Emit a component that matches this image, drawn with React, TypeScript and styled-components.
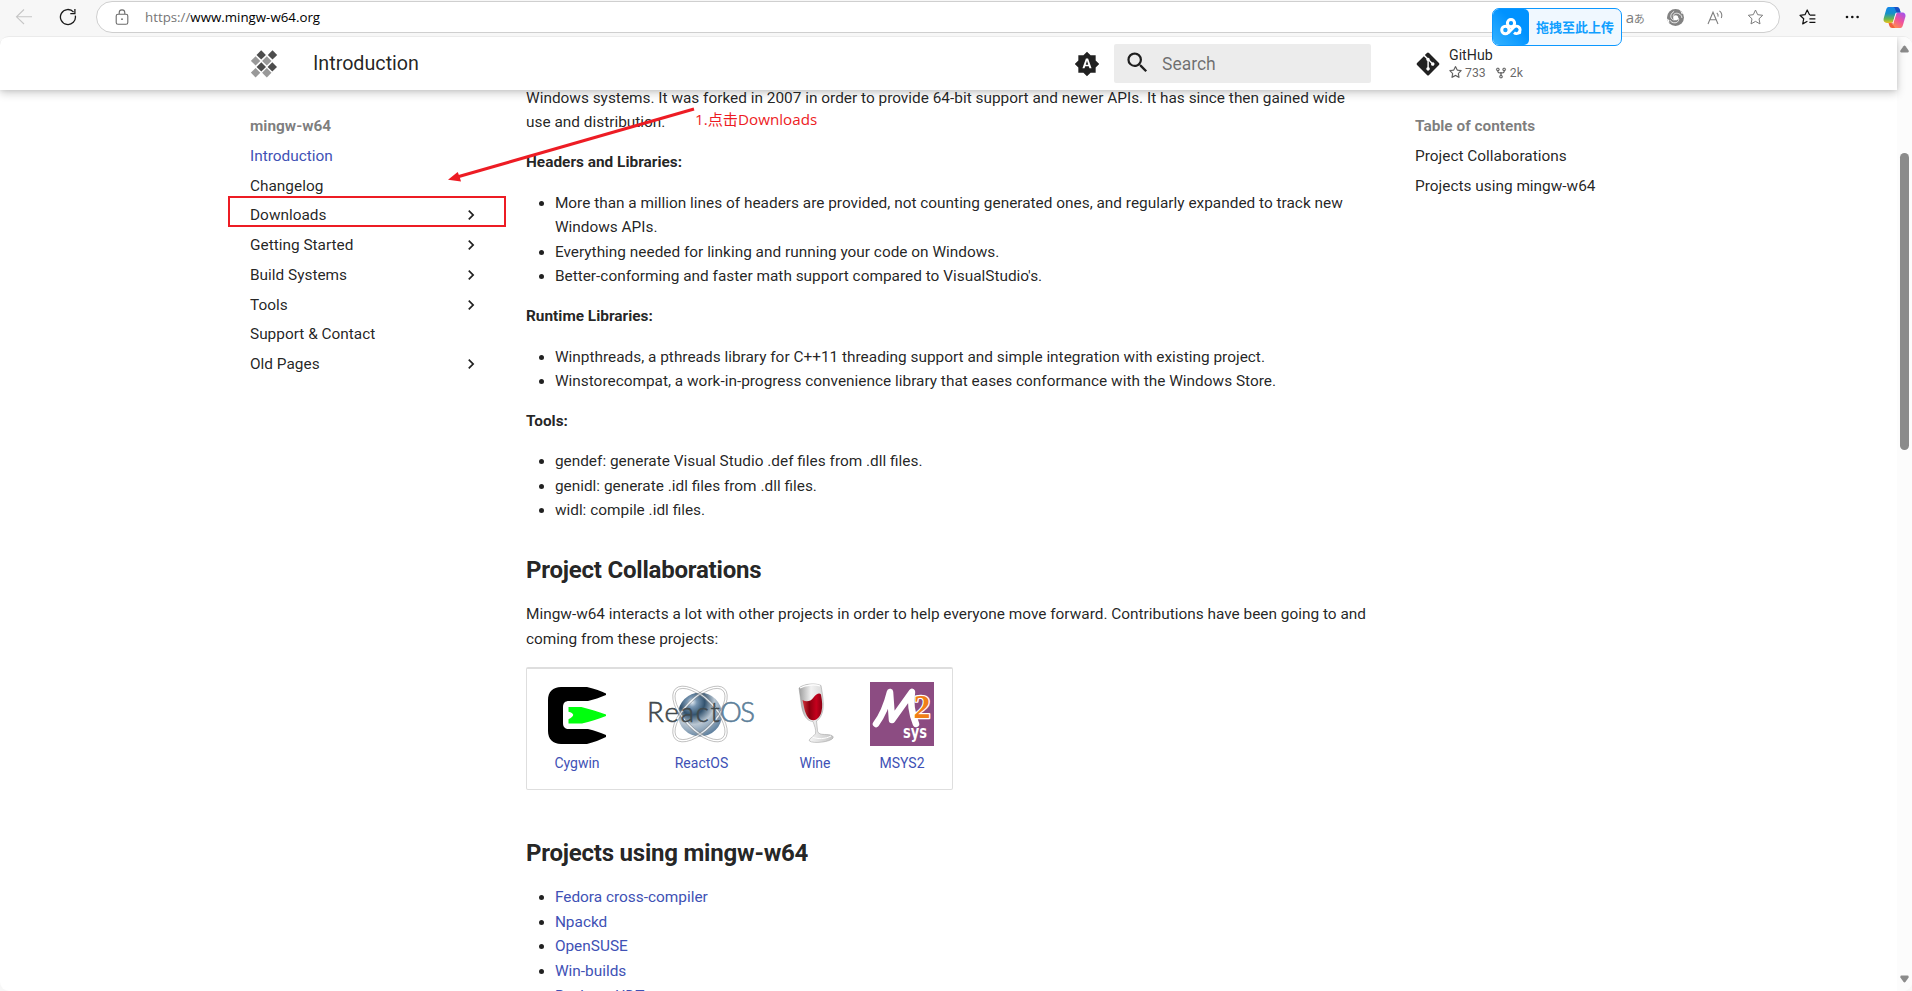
import React from 'react';
import styled, { createGlobalStyle } from 'styled-components';
import { MdBrightnessAuto, MdSearch } from 'react-icons/md';
import { FaGitAlt } from 'react-icons/fa';
import { GoRepoForked, GoStar } from 'react-icons/go';

const GlobalStyle = createGlobalStyle`
  * { box-sizing: border-box; }
  html, body { margin: 0; padding: 0; overflow: hidden; }
  a { color: inherit; text-decoration: none; }
`;

const Browser = styled.div`
  position: relative;
  display: flex;
  flex-direction: column;
  width: 1912px;
  height: 991px;
  overflow: hidden;
  background: #f7f7f7;
  color: #000000de;
  font-family: Roboto, 'Liberation Sans', sans-serif;
  font-size: 15.4px;
`;

/* ---------- Browser toolbar ---------- */

const Toolbar = styled.div`
  display: flex;
  align-items: flex-start;
  height: 36px;
  flex: none;
  padding: 1px 8px 0 7px;
`;

const ToolButton = styled.span<{ $width: number }>`
  display: flex;
  align-items: center;
  justify-content: center;
  flex: none;
  width: ${(p) => p.$width}px;
  height: 32px;
`;

const AddressBar = styled.div`
  display: flex;
  align-items: center;
  width: 1684px;
  height: 32px;
  flex: none;
  margin-left: 1px;
  padding: 0 4px 0 16px;
  border: 1px solid #cfcfcf;
  border-radius: 16px;
  background: #fff;
`;

const Url = styled.span`
  flex: 1;
  padding-left: 14px;
  font-family: 'Open Sans', 'Noto Sans', sans-serif;
  font-size: 13.3px;
  line-height: 20px;
  color: #000;
`;

const Scheme = styled.span`
  color: #767676;
`;

const Translate = styled.span`
  font-family: 'Open Sans', 'Noto Sans CJK JP', sans-serif;
  font-weight: 400;
  font-size: 15px;
  letter-spacing: -0.5px;
  color: #7d7d7d;
  small { font-size: 11px; font-weight: 400; }
`;

/* ---------- Page ---------- */

const Viewport = styled.div`
  display: flex;
  flex: 1;
  min-height: 0;
  overflow: hidden;
  border-top: 1px solid #ebebeb;
  border-radius: 9px;
  background: #fff;
`;

const Page = styled.div`
  display: flex;
  flex-direction: column;
  flex: 1;
  min-width: 0;
`;

const Header = styled.header`
  position: relative;
  z-index: 1;
  display: flex;
  align-items: center;
  height: 53px;
  flex: none;
  padding: 0 229px 0 251px;
  background: #fff;
  box-shadow: 0 0 4.4px #0000001a, 0 4.4px 8.8px #0003;
`;

const HeaderTitle = styled.span`
  flex: 1;
  padding-left: 35px;
  font-size: 19.7px;
  line-height: 53px;
`;

const SearchBox = styled.label`
  display: flex;
  align-items: center;
  width: 257px;
  height: 39px;
  margin-left: 14px;
  padding-left: 10px;
  border-radius: 2px;
  background: #ececec;
  font-size: 17.5px;
  color: #0000008a;
  gap: 11px;
  svg { color: #000000de; margin-top: -2px; }
`;

const Source = styled.a`
  display: flex;
  align-items: center;
  width: 253px;
  margin-left: 44px;
  gap: 8px;
  svg { flex: none; }
`;

const RepoName = styled.div`
  font-size: 14.2px;
  line-height: 18px;
`;

const Facts = styled.div`
  display: flex;
  gap: 9px;
  font-size: 12.3px;
  line-height: 18px;
  color: #0000009e;
`;

const Fact = styled.span`
  display: flex;
  align-items: center;
  gap: 3px;
`;

const Main = styled.div`
  display: flex;
  flex: 1;
  min-height: 0;
  overflow: hidden;
`;

const Sidebar = styled.nav<{ $primary?: boolean }>`
  flex: none;
  width: ${(p) => (p.$primary ? 234 : 266)}px;
  margin-left: ${(p) => (p.$primary ? 250 : 35)}px;
  padding-top: 26.4px;
  line-height: 20px;
`;

const NavTitle = styled.div`
  font-weight: 700;
  color: #00000085;
`;

const NavItem = styled.a<{ $active?: boolean }>`
  display: flex;
  align-items: center;
  justify-content: space-between;
  height: 20px;
  margin-top: 9.7px;
  padding-right: 3px;
  color: ${(p) => (p.$active ? '#4051b5' : 'inherit')};
`;

const Article = styled.article`
  flex: none;
  width: 854px;
  margin-left: 42px;
  margin-top: -4.2px;
  line-height: 24.64px;
`;

const Paragraph = styled.p`
  margin: 0 0 15.4px;
`;

const Bullets = styled.ul`
  margin: 0 0 15.4px;
  padding: 0 0 0 28.9px;
`;

const Heading = styled.h2`
  margin: 31px 0 14.4px;
  font-size: 24.06px;
  font-weight: 700;
  line-height: 33.7px;
  letter-spacing: -0.24px;
`;

const Link = styled.a`
  color: #4051b5;
`;

const Projects = styled.div`
  display: flex;
  width: 427px;
  height: 123px;
  margin-bottom: 47px;
  border: 1px solid #dedede;
  border-top-width: 2px;
  border-radius: 2px;
  font-size: 14px;
  color: #4051b5;
`;

const Project = styled.a<{ $width: number }>`
  display: flex;
  flex-direction: column;
  align-items: center;
  width: ${(p) => p.$width}px;
  padding-top: 13px;
  line-height: 22px;
  svg { margin-bottom: 6px; flex: none; overflow: visible; }
`;

/* ---------- Scrollbar ---------- */

const Scrollbar = styled.div`
  display: flex;
  flex-direction: column;
  align-items: center;
  width: 15px;
  flex: none;
  padding: 8px 0 8px;
  background: #fcfcfc;
`;

const Thumb = styled.div`
  width: 9px;
  height: 297px;
  margin: 100px 0 auto;
  border-radius: 5px;
  background: #8b8b8b;
`;

/* ---------- Overlays ---------- */

const UploadBadge = styled.div`
  position: absolute;
  left: 1492px;
  top: 8px;
  z-index: 3;
  display: flex;
  width: 130px;
  height: 38px;
  overflow: hidden;
  border: 1px solid #0c98ff;
  border-radius: 7px;
  background: #f0f8ff;
`;

const UploadLogo = styled.span`
  display: flex;
  align-items: center;
  justify-content: center;
  width: 36px;
  border-radius: 0 5px 5px 0;
  background: linear-gradient(45deg, #36b3ff, #0092ff 60%);
`;

const UploadText = styled.span`
  padding-left: 7px;
  font-family: 'Noto Sans CJK SC', sans-serif;
  font-weight: 700;
  font-size: 13px;
  line-height: 36px;
  color: #109fff;
`;

const Highlight = styled.div`
  position: absolute;
  left: 228px;
  top: 196px;
  z-index: 2;
  width: 278px;
  height: 31px;
  border: 2px solid #ed1c24;
`;

const ArrowMark = styled.svg`
  position: absolute;
  left: 440px;
  top: 100px;
  z-index: 2;
`;

const Note = styled.div`
  position: absolute;
  left: 695px;
  top: 108px;
  z-index: 2;
  font-family: 'Open Sans', 'Noto Sans CJK SC', sans-serif;
  font-size: 15.2px;
  line-height: 22px;
  color: #ed1c24;
`;

/* ---------- Drawings ---------- */

const SiteLogo = () => (
  <svg width="27" height="28" viewBox="251 49.5 27 28">
    {[[261.2, 54.4], [272.5, 54.4], [261.3, 66.4], [272.3, 66.4]].map(([x, y]) => (
      <path key={`${x}${y}`} d={`M${x} ${y - 4.7}l4.7 4.7-4.7 4.7-4.7-4.7z`} fill="#4d4d4d" />
    ))}
    {[[255.6, 60.4], [266.8, 60.4], [255.6, 72.2], [266.8, 72.2]].map(([x, y]) => (
      <path key={`${x}${y}`} d={`M${x} ${y - 4.7}l4.7 4.7-4.7 4.7-4.7-4.7z`} fill="#999" />
    ))}
  </svg>
);

const BackIcon = () => (
  <svg width="18" height="18" viewBox="0 0 18 18" fill="none" stroke="#c6c6c6" strokeWidth="1.1">
    <path d="M17 8.8H1.5M9 1.5 1.5 8.8 9 16" />
  </svg>
);

const ReloadIcon = () => (
  <svg width="18" height="18" viewBox="0 0 18 18" fill="none" stroke="#1a1a1a" strokeWidth="1.3">
    <path d="M16.3 7.6A7.5 7.5 0 1 1 14.6 4.1M15.9 1v4.6h-4.6" />
  </svg>
);

const LockIcon = () => (
  <svg width="14" height="16" viewBox="0 0 14 16" fill="none" stroke="#6b6b6b" strokeWidth="1.1">
    <rect x="1.2" y="5.2" width="11.6" height="10" rx="1.8" />
    <path d="M4.2 5V3.7a2.8 2.8 0 0 1 5.6 0V5" />
    <circle cx="7" cy="10.2" r=".9" fill="#6b6b6b" stroke="none" />
  </svg>
);

const SwirlIcon = () => (
  <svg width="17" height="17" viewBox="0 0 16 16">
    <circle cx="8" cy="8" r="8" fill="#828282" />
    <circle cx="8.200" cy="8.200" r="2.400" fill="#fff" />
    <g fill="none" stroke="#fff" strokeWidth=".8">
      <path d="M5.900 7C5.600 4.800 8 3.200 11 4.400c2.200.9 3 2.600 3 4" />
      <path d="M10.600 8.500c1.200 2-.4 4.300-3 4.500-2.300.1-4-.9-5-2.600" />
      <path d="M7 10.300C4.200 10.300 2.800 7.500 4 5c.6-1.300 1.600-2.200 2.700-2.700" />
    </g>
    <path d="M0 9.500C.4 11 1.200 12.600 2.300 13.600L1.800 10zM15 4 12.300 1.200 14 5z" fill="#fff" />
  </svg>
);

const ReadAloudIcon = () => (
  <svg width="17" height="15" viewBox="0 0 17 15" fill="none" stroke="#7d7d7d" strokeWidth="1.05">
    <path d="M1 14 6 2.200 11 14M2.800 9.800h6.400" />
    <path d="M9.800 2.800c1.200 1 1.600 2.300 1.200 3.800M12.400.8c2.400 1.800 3 4.300 1.900 7.200" />
  </svg>
);

const STAR = 'M8.200 1l2.200 4.700 5 .6-3.700 3.500 1 5.100-4.500-2.500-4.500 2.500 1-5.100L1 6.300l5-.6z';

const StarIcon = () => (
  <svg width="17" height="16" viewBox="0 0 16.400 16" fill="none" stroke="#7d7d7d" strokeLinejoin="round">
    <path d={STAR} />
  </svg>
);

const FavoritesIcon = () => (
  <svg width="18" height="17" viewBox="0 0 18 17" fill="none" stroke="#111" strokeWidth="1.200" strokeLinejoin="round">
    <path d="M11 5.700h-.5L8.200 1 6 5.700l-5 .6 3.700 3.500-1 5.100L8.400 12.300M10.400 9.800h6M10.400 13.300h6M11 6.200h5.400" />
  </svg>
);

const MoreIcon = () => (
  <svg width="15" height="4" viewBox="0 0 15 4" fill="#111">
    <circle cx="2" cy="2" r="1.300" />
    <circle cx="7.300" cy="2" r="1.300" />
    <circle cx="12.600" cy="2" r="1.300" />
  </svg>
);

const CopilotIcon = () => (
  <svg width="23" height="21" viewBox="0 0 23 21">
    <defs>
      <linearGradient id="cpLeft" x1="0" y1="0" x2="0" y2="1">
        <stop offset="0" stopColor="#1487ec" />
        <stop offset=".4" stopColor="#1690c8" />
        <stop offset=".75" stopColor="#6ab84c" />
        <stop offset="1" stopColor="#f0c11d" />
      </linearGradient>
      <linearGradient id="cpRight" x1=".8" y1="0" x2=".2" y2="1">
        <stop offset="0" stopColor="#a452ec" />
        <stop offset=".5" stopColor="#f1529a" />
        <stop offset="1" stopColor="#ff8f4e" />
      </linearGradient>
    </defs>
    <path d="M5.500 0h8.200c1.800 0 2.700 1.200 3.200 3l.7 2.400h-2.800c-1.500 0-2.300.8-2.700 2.300L10.300 14c-.4 1.400-1.300 2-2.700 2H4C1.200 16 0 14 .7 11.300L3.200 2.600C3.700.9 4.300 0 5.500 0z" fill="url(#cpLeft)" />
    <path d="M17.500 21H9.300l1.500-6.800 1.800-6.500c.4-1.400 1.300-2.300 2.700-2.300H19c2.800 0 4 2 3.300 4.700l-2.500 8.400c-.5 1.600-1.100 2.500-2.300 2.500z" fill="url(#cpRight)" />
    <path d="M13.700 0c1.800 0 2.700 1.200 3.200 3l.7 2.400h-4.200L12 1.800C11.700.7 11 0 10 0z" fill="#1a4fc4" />
    <path d="M5.500 16h2.100c1.400 0 2.300-.6 2.700-2l1.700-5.500L10.500 14l-.8 3.500L12 21H9.300c-1.800 0-2.700-1.200-3.200-3z" fill="#f0603c" />
    <path d="M13.800 5.400 10.300 16.500l-2.300-.5c1.300 0 2-.9 2.300-2L12.100 7.700c.3-1.300.8-1.900 1.700-2.300z" fill="#fff" opacity=".85" />
  </svg>
);

const ChevronIcon = () => (
  <svg width="20" height="20" viewBox="0 0 24 24" fill="#000000de">
    <path d="M8.590 16.580 13.170 12 8.590 7.410 10 6l6 6-6 6z" />
  </svg>
);

const NetdiskIcon = () => (
  <svg width="22" height="18" viewBox="0 0 22 18" fill="none" stroke="#fff" strokeWidth="3">
    <circle cx="11" cy="5.200" r="3.600" />
    <circle cx="5.400" cy="12" r="3.700" />
    <path d="M8.300 14.700 13.700 9.300A3.700 3.700 0 1 1 14 14.700" />
    <circle cx="19.600" cy="14.600" r="1.600" fill="#fff" stroke="none" />
  </svg>
);

const CygwinLogo = () => (
  <svg width="58" height="64" viewBox="0 0 58 64">
    <path d="M13 5h26c8 2 14 4 19 6.500v1.500c-6 2.500-12 4.500-18 6H21c-4 0-6 2-6 6v16c0 4 2 6 6 6h19c7 1.500 12 3.500 18 6V55c-6 3-12 5-19 7H13C5 62 0 57 0 49V18C0 10 5 5 13 5z" fill="#000" />
    <path d="M20.500 25h12.800c8.700 2 17 5 24.700 7.600v1.400C50 37 42 40 34 41.500H20.500v-4.300c3.500-1.400 4.700-3.300 4.700-4.400 0-.9-2-2.600-4.700-3z" fill="#00ff0d" />
  </svg>
);

const ReactOSLogo = () => (
  <svg width="106" height="64" viewBox="0 0 106 64">
    <defs>
      <radialGradient id="globe" cx=".32" cy=".22" r=".85">
        <stop offset="0" stopColor="#e6edf3" />
        <stop offset=".13" stopColor="#7896b2" />
        <stop offset=".34" stopColor="#33536f" />
        <stop offset=".6" stopColor="#bac7d3" />
        <stop offset="1" stopColor="#577a9a" />
      </radialGradient>
    </defs>
    <circle cx="51" cy="32.500" r="22" fill="url(#globe)" />
    <g fill="none" stroke="#fff" strokeWidth="1.500" opacity=".8">
      <ellipse cx="51" cy="32" rx="34" ry="15.500" transform="rotate(46 51 32)" />
      <ellipse cx="51" cy="32" rx="34" ry="15.500" transform="rotate(-46 51 32)" />
    </g>
    <g fill="none" stroke="#8a8a8a" strokeWidth=".5">
      <ellipse cx="51" cy="32" rx="35.200" ry="16.700" transform="rotate(46 51 32)" />
      <ellipse cx="51" cy="32" rx="32.800" ry="14.300" transform="rotate(46 51 32)" />
      <ellipse cx="51" cy="32" rx="35.200" ry="16.700" transform="rotate(-46 51 32)" />
      <ellipse cx="51" cy="32" rx="32.800" ry="14.300" transform="rotate(-46 51 32)" />
    </g>
    <g fontFamily="Lato, sans-serif" fontWeight="300" fontSize="27.500" strokeWidth=".6">
      <text x="-2" y="40" textLength="73" fill="#414a4e" stroke="#414a4e">React</text>
      <text x="71" y="40" textLength="35" fill="#5d7f99" stroke="#5d7f99">OS</text>
    </g>
  </svg>
);

const WineLogo = () => (
  <svg width="38" height="64" viewBox="0 0 38 64">
    <defs>
      <linearGradient id="wine" x1="0" y1="0" x2="1" y2="0">
        <stop offset="0" stopColor="#d3323a" />
        <stop offset=".35" stopColor="#8c0010" />
        <stop offset=".7" stopColor="#c5001d" />
        <stop offset="1" stopColor="#8b0013" />
      </linearGradient>
      <linearGradient id="glass" x1="0" y1="0" x2="1" y2="0">
        <stop offset="0" stopColor="#9c9c9c" />
        <stop offset=".35" stopColor="#f2f2f2" />
        <stop offset="1" stopColor="#c4c4c4" />
      </linearGradient>
    </defs>
    <path d="M3 6C7 2 19 .5 25 3.500c1.500 9 3 17 2 24-.8 5-3 9.500-6.500 11.500l1 9.500c.4 3.500 3.500 4 9 4 4.500.2 7.500 1.500 6.500 3.500-2 4-20 6-23.500 3-1.500-2 4.500-4.500 6-7.500 1-3-1.500-9-2.500-12C10 39 7 32 5.500 24z" fill="url(#glass)" stroke="#999" strokeWidth=".5" />
    <path d="M6.500 18c4 2.500 8 1.500 11-2.500s6-5 7.500-3c1.300 7 1.700 12 .5 17-1 4.500-4 8.500-8 8.800-4.500.2-7.500-5-9-10.800z" fill="url(#wine)" />
    <path d="M4 6c5-3 15-4 20-2" fill="none" stroke="#fff" strokeWidth="1.200" />
    <path d="M16.500 55c5 2.500 13 2 18.500-1" fill="none" stroke="#fff" />
  </svg>
);

const MsysLogo = () => (
  <svg width="64" height="64" viewBox="0 0 64 64">
    <rect width="64" height="64" fill="#8c4c82" />
    <path d="M6 42C12 34 17 22 20 10l2 28L42 10c-2 11 0 22 4 32" fill="none" stroke="#fff" strokeWidth="6.500" strokeLinecap="round" strokeLinejoin="round" />
    <text x="43.500" y="36" fontFamily="'Liberation Serif', serif" fontWeight="700" fontSize="34" fill="#f07f17" stroke="#fff" strokeWidth="2.400" strokeLinejoin="round" paintOrder="stroke">2</text>
    <text x="33" y="56" fontFamily="'DejaVu Sans', sans-serif" fontWeight="700" fontSize="18" textLength="24" lengthAdjust="spacingAndGlyphs" fill="#fff">sys</text>
  </svg>
);

/* ---------- Content ---------- */

const NAV = [
  { label: 'Introduction', active: true },
  { label: 'Changelog' },
  { label: 'Downloads', nested: true },
  { label: 'Getting Started', nested: true },
  { label: 'Build Systems', nested: true },
  { label: 'Tools', nested: true },
  { label: 'Support & Contact' },
  { label: 'Old Pages', nested: true },
];

const PROJECTS = ['Fedora cross-compiler', 'Npackd', 'OpenSUSE', 'Win-builds', 'Buyboot UDT'];

export default function App() {
  return (
    <Browser>
      <GlobalStyle />
      <Toolbar>
        <ToolButton $width={34}><BackIcon /></ToolButton>
        <ToolButton $width={54}><ReloadIcon /></ToolButton>
        <AddressBar>
          <ToolButton $width={18}><LockIcon /></ToolButton>
          <Url><Scheme>https://</Scheme>www.mingw-w64.org</Url>
          <ToolButton $width={40}><Translate>a<small>あ</small></Translate></ToolButton>
          <ToolButton $width={40}><SwirlIcon /></ToolButton>
          <ToolButton $width={40}><ReadAloudIcon /></ToolButton>
          <ToolButton $width={40}><StarIcon /></ToolButton>
        </AddressBar>
        <ToolButton $width={56}><FavoritesIcon /></ToolButton>
        <ToolButton $width={32}><MoreIcon /></ToolButton>
        <ToolButton $width={52}><CopilotIcon /></ToolButton>
      </Toolbar>

      <Viewport>
        <Page>
          <Header>
            <SiteLogo />
            <HeaderTitle>Introduction</HeaderTitle>
            <MdBrightnessAuto size={26} />
            <SearchBox><MdSearch size={27} />Search</SearchBox>
            <Source>
              <FaGitAlt size={26} />
              <div>
                <RepoName>GitHub</RepoName>
                <Facts>
                  <Fact><GoStar size={13} strokeWidth={0.5} />733</Fact>
                  <Fact><GoRepoForked size={12} strokeWidth={0.5} />2k</Fact>
                </Facts>
              </div>
            </Source>
          </Header>

          <Main>
            <Sidebar $primary>
              <NavTitle>mingw-w64</NavTitle>
              {NAV.map((item) => (
                <NavItem key={item.label} $active={item.active}>
                  {item.label}
                  {item.nested && <ChevronIcon />}
                </NavItem>
              ))}
            </Sidebar>

            <Article>
              <Paragraph>
                Windows systems. It was forked in 2007 in order to provide 64-bit support and newer APIs. It has since then gained wide<br />
                use and distribution.
              </Paragraph>
              <Paragraph><strong>Headers and Libraries:</strong></Paragraph>
              <Bullets>
                <li>More than a million lines of headers are provided, not counting generated ones, and regularly expanded to track new<br />Windows APIs.</li>
                <li>Everything needed for linking and running your code on Windows.</li>
                <li>Better-conforming and faster math support compared to VisualStudio's.</li>
              </Bullets>
              <Paragraph><strong>Runtime Libraries:</strong></Paragraph>
              <Bullets>
                <li>Winpthreads, a pthreads library for C++11 threading support and simple integration with existing project.</li>
                <li>Winstorecompat, a work-in-progress convenience library that eases conformance with the Windows Store.</li>
              </Bullets>
              <Paragraph><strong>Tools:</strong></Paragraph>
              <Bullets>
                <li>gendef: generate Visual Studio .def files from .dll files.</li>
                <li>genidl: generate .idl files from .dll files.</li>
                <li>widl: compile .idl files.</li>
              </Bullets>
              <Heading>Project Collaborations</Heading>
              <Paragraph>
                Mingw-w64 interacts a lot with other projects in order to help everyone move forward. Contributions have been going to and<br />
                coming from these projects:
              </Paragraph>
              <Projects>
                <Project $width={100}><CygwinLogo />Cygwin</Project>
                <Project $width={149}><ReactOSLogo />ReactOS</Project>
                <Project $width={78}><WineLogo />Wine</Project>
                <Project $width={96}><MsysLogo />MSYS2</Project>
              </Projects>
              <Heading>Projects using mingw-w64</Heading>
              <Bullets>
                {PROJECTS.map((name) => (
                  <li key={name}><Link>{name}</Link></li>
                ))}
              </Bullets>
            </Article>

            <Sidebar>
              <NavTitle>Table of contents</NavTitle>
              <NavItem>Project Collaborations</NavItem>
              <NavItem>Projects using mingw-w64</NavItem>
            </Sidebar>
          </Main>
        </Page>

        <Scrollbar>
          <svg width="9" height="8" viewBox="0 0 9 8"><path d="M3.400 1.200q1.100-1.400 2.200 0L8.600 5.600Q9 7.500 7.500 7.500h-6Q0 7.500.4 5.600z" fill="#8b8b8b" /></svg>
          <Thumb />
          <svg width="9" height="8" viewBox="0 0 9 8"><path d="M3.400 6.800q1.100 1.400 2.200 0L8.600 2.400Q9 .5 7.500.5h-6Q0 .5.4 2.400z" fill="#8b8b8b" /></svg>
        </Scrollbar>
      </Viewport>

      <Highlight />
      <ArrowMark width="260" height="90" viewBox="440 100 260 90">
        <path d="M694 109 458 176.800" stroke="#ed1c24" strokeWidth="3" />
        <path d="M448 179.700 457.700 172 459.500 176.500 461 181.500z" fill="#ed1c24" />
      </ArrowMark>
      <Note>1.点击Downloads</Note>
      <UploadBadge>
        <UploadLogo><NetdiskIcon /></UploadLogo>
        <UploadText>拖拽至此上传</UploadText>
      </UploadBadge>
    </Browser>
  );
}
